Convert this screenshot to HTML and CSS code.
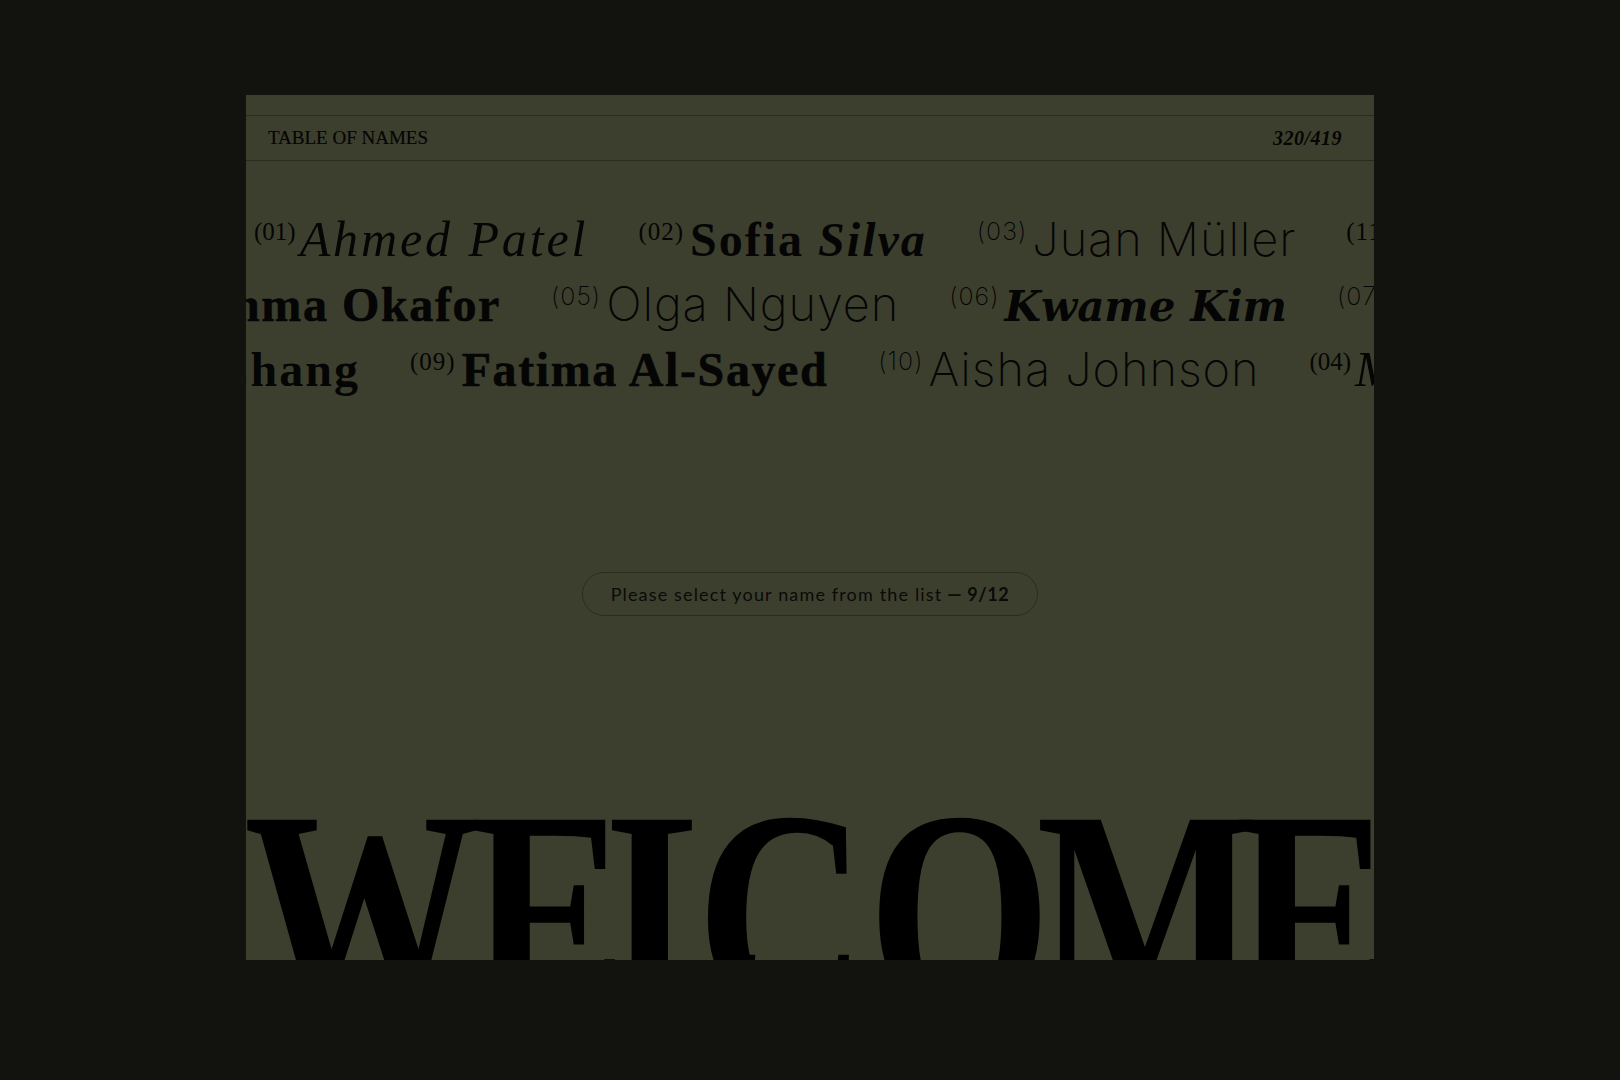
FILE: index.html
```html
<!DOCTYPE html>
<html lang="en">
<head>
<meta charset="utf-8">
<title>Table of Names</title>
<link rel="stylesheet" href="styles.css">
</head>
<body>
<main class="stage">
  <section class="panel">
    <header class="bar">
      <span class="bar-title">TABLE OF NAMES</span>
      <span class="bar-count">320/419</span>
    </header>

    <div class="names">
      <div class="row row-1">
        <span class="item f-italic"><span class="no">(01)</span>Ahmed Patel</span>
        <span class="item f-bold"><span class="no">(02)</span>Sofia <em>Silva</em></span>
        <span class="item f-thin"><span class="no">(03)</span>Juan Müller</span>
        <span class="item f-serif"><span class="no">(11)</span>Lucas Dubois</span>
      </div>
      <div class="row row-2">
        <span class="lead"><span class="item f-heavy"><span class="no">(12)</span>Emma Okafor</span></span>
        <span class="item f-thin"><span class="no">(05)</span>Olga Nguyen</span>
        <span class="item f-bolditalic"><span class="no">(06)</span>Kwame Kim</span>
        <span class="item f-thin"><span class="no">(07)</span>Elena Rossi</span>
      </div>
      <div class="row row-3">
        <span class="lead"><span class="item f-bold"><span class="no">(08)</span>Wei Zhang</span></span>
        <span class="item f-heavy"><span class="no">(09)</span>Fatima Al-Sayed</span>
        <span class="item f-thin"><span class="no">(10)</span>Aisha Johnson</span>
        <span class="item f-italic"><span class="no">(04)</span>Maria Costa</span>
      </div>
    </div>

    <div class="prompt">
      <span class="pill">Please select your name from the list <b>— 9/12</b></span>
    </div>

    <div class="welcome">
      <div class="welcome-word"><span class="l1">W</span><span class="l2">E</span><span class="l3">L</span><span class="l4">C</span><span class="l5">O</span><span class="l6">M</span><span class="l7">E</span></div>
    </div>
  </section>
</main>
</body>
</html>
```

FILE: styles.css
```css
html, body {
  margin: 0;
  padding: 0;
}

body {
  background: #12130f;
  font-family: "Liberation Serif", serif;
}

.stage {
  height: 1080px;
  padding-top: 95px;
  box-sizing: border-box;
}

.panel {
  width: 1128px;
  height: 865px;
  margin: 0 auto;
  background: #3d3f2e;
  color: #050505;
  display: flex;
  flex-direction: column;
  overflow: hidden;
}

/* header bar */
.bar {
  margin-top: 20px;
  height: 44px;
  border-top: 1px solid #2b2d20;
  border-bottom: 1px solid #2b2d20;
  display: flex;
  align-items: center;
  justify-content: space-between;
  padding: 0 32px 0 22px;
  flex-shrink: 0;
}

.bar-title {
  font: 400 19px "Liberation Serif", serif;
  -webkit-text-stroke: 0.2px #050505;
}

.bar-count {
  font: italic 700 20px "Liberation Serif", serif;
  letter-spacing: 0.5px;
}

/* rows of names */
.names {
  padding-top: 49px;
  flex-shrink: 0;
}

.row {
  display: flex;
  align-items: baseline;
  gap: 50px;
  height: 65px;
  white-space: nowrap;
  overflow: hidden;
}

.row-1 {
  padding-left: 8px;
}

.lead {
  display: flex;
  justify-content: flex-end;
  flex-shrink: 0;
}

.row-2 .lead {
  width: 255px;
}

.row-3 .lead {
  width: 114px;
}

.item {
  flex-shrink: 0;
  line-height: 1;
}

.no {
  font-family: "Liberation Serif", serif;
  font-size: 25px;
  font-weight: 400;
  font-style: normal;
  letter-spacing: 1px;
  vertical-align: 16px;
  margin-right: 6px;
  -webkit-text-stroke: 0;
}

.item em {
  font-style: italic;
}

.f-italic {
  font: italic 400 50px "Liberation Serif", serif;
  letter-spacing: 2.9px;
}

.f-italic .no {
  letter-spacing: 0;
  margin-right: 4px;
}

.f-serif {
  font: 400 48px "Liberation Serif", serif;
}

.f-bold {
  font: 700 48px "Liberation Serif", serif;
  letter-spacing: 2px;
}

.f-heavy {
  font: 700 48px "Liberation Serif", serif;
  letter-spacing: 1.6px;
  -webkit-text-stroke: 0.6px #050505;
}

.f-bolditalic {
  font: italic 700 42px "DejaVu Serif", serif;
  letter-spacing: 0;
}

.f-bolditalic .no,
.f-thin .no {
  font-family: "Inter", sans-serif;
  font-weight: 200;
  font-size: 25px;
  letter-spacing: 1px;
  margin-right: 5px;
}

.f-thin {
  font: 200 47px "Inter", sans-serif;
  letter-spacing: 0.9px;
}

/* prompt pill */
.prompt {
  margin-top: 167px;
  display: flex;
  justify-content: center;
  flex-shrink: 0;
}

.pill {
  display: inline-flex;
  align-items: center;
  height: 42px;
  padding: 0 28px;
  border: 1px solid #2a2c1f;
  border-radius: 22px;
  font: 400 18px "Lato", sans-serif;
  letter-spacing: 1.15px;
  color: #0a0a08;
}

.pill b {
  font-weight: 700;
  margin-left: 5px;
  letter-spacing: 0.6px;
}

/* welcome */
.welcome {
  margin-top: auto;
  height: 194px;
  overflow: hidden;
  flex-shrink: 0;
}

.welcome-word {
  font: 700 295px "Liberation Serif", serif;
  line-height: 1;
  white-space: nowrap;
  transform: scaleX(0.8);
  transform-origin: left top;
  margin-left: -2.5px;
  color: #000;
}

.welcome-word span {
  display: inline-block;
}

.l1 { margin-right: -13px; }
.l2 { margin-right: -24px; }
.l3 { margin-right: -86px; }
.l4 { margin-right: 1px; }
.l5 { margin-right: -19px; }
.l6 { margin-right: -30px; }
```
